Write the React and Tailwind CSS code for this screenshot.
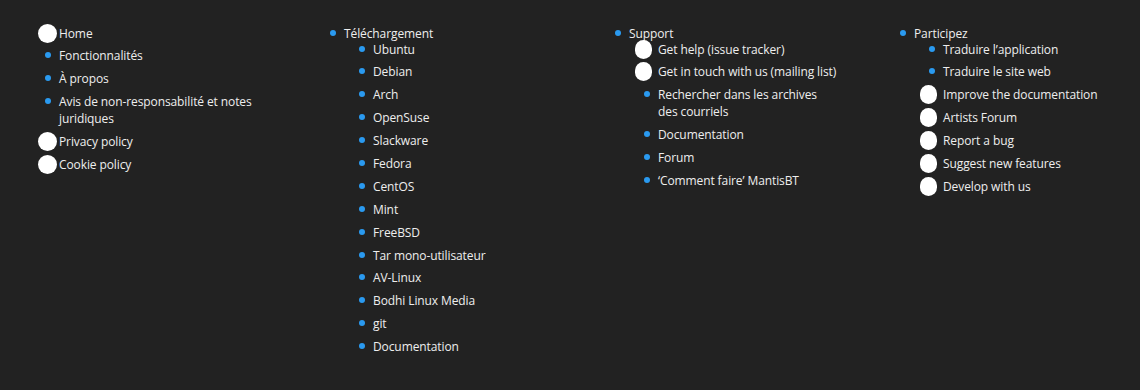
import React from 'react';

// Footer link columns
const columns = [
    {
        items: [
            { label: 'Home', icon: true },
            { label: 'Fonctionnalités' },
            { label: 'À propos' },
            { label: 'Avis de non-responsabilité et notes juridiques' },
            { label: 'Privacy policy', icon: true },
            { label: 'Cookie policy', icon: true },
        ],
    },
    {
        items: [
            {
                label: 'Téléchargement',
                children: [
                    { label: 'Ubuntu' },
                    { label: 'Debian' },
                    { label: 'Arch' },
                    { label: 'OpenSuse' },
                    { label: 'Slackware' },
                    { label: 'Fedora' },
                    { label: 'CentOS' },
                    { label: 'Mint' },
                    { label: 'FreeBSD' },
                    { label: 'Tar mono-utilisateur' },
                    { label: 'AV-Linux' },
                    { label: 'Bodhi Linux Media' },
                    { label: 'git' },
                    { label: 'Documentation' },
                ],
            },
        ],
    },
    {
        items: [
            {
                label: 'Support',
                children: [
                    { label: 'Get help (issue tracker)', icon: true },
                    { label: 'Get in touch with us (mailing list)', icon: true },
                    { label: 'Rechercher dans les archives des courriels' },
                    { label: 'Documentation' },
                    { label: 'Forum' },
                    { label: '‘Comment faire’ MantisBT' },
                ],
            },
        ],
    },
    {
        items: [
            {
                label: 'Participez',
                children: [
                    { label: 'Traduire l’application' },
                    { label: 'Traduire le site web' },
                    { label: 'Improve the documentation', icon: true },
                    { label: 'Artists Forum', icon: true },
                    { label: 'Report a bug', icon: true },
                    { label: 'Suggest new features', icon: true },
                    { label: 'Develop with us', icon: true },
                ],
            },
        ],
    },
];

const Marker = ({ icon, nested }) => (
    <span className={`w-[23px] -ml-[23px] shrink-0 flex justify-center ${icon && nested ? 'pr-[6px]' : ''}`}>
        {icon ? (
            <span className="w-[19px] h-[19px] -my-px rounded-full bg-white" />
        ) : (
            <span className="mt-[5px] w-[6px] h-[6px] rounded-full bg-[#2a9af0]" />
        )}
    </span>
);

const Item = ({ item, nested }) => (
    <li className="mt-[5.9px] first:mt-0">
        <div className="flex">
            <Marker icon={item.icon} nested={nested} />
            <span>{item.label}</span>
        </div>
        {item.children && (
            <ul className="-mt-px pl-[29px]">
                {item.children.map((child) => (
                    <Item key={child.label} item={child} nested />
                ))}
            </ul>
        )}
    </li>
);

export default function App() {
    return (
        <div
            className="w-[1140px] h-[390px] bg-[#222222] text-[#eeeeee] text-[12px] leading-[17px] tracking-[-0.1px] flex"
            style={{ fontFamily: '"Open Sans", sans-serif' }}
        >
            {columns.map((col, i) => (
                <ul key={i} className="w-[285px] pl-[59px] pr-[17px] pt-[24.5px]">
                    {col.items.map((item) => (
                        <Item key={item.label} item={item} />
                    ))}
                </ul>
            ))}
        </div>
    );
}
